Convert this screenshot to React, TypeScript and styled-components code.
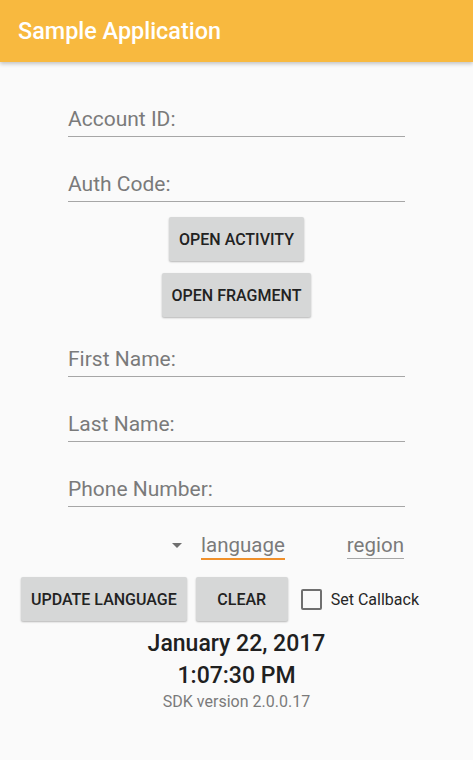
import React from "react";
import styled, { createGlobalStyle } from "styled-components";

const GlobalStyle = createGlobalStyle`
  html, body {
    margin: 0;
    padding: 0;
    background: #fafafa;
  }
  body {
    font-family: Roboto, "Noto Sans", "Liberation Sans", sans-serif;
    width: 473px;
    height: 760px;
    overflow: hidden;
  }
`;

const Screen = styled.div`
  width: 473px;
  height: 760px;
  background: #fafafa;
  display: flex;
  flex-direction: column;
`;

const AppBar = styled.header`
  height: 62px;
  flex: 0 0 62px;
  background: #f8b93f;
  display: flex;
  align-items: center;
  padding-left: 18px;
  box-shadow: 0 2px 4px rgba(0, 0, 0, 0.22);
  position: relative;
  z-index: 1;
`;

const Title = styled.h1`
  margin: 0;
  font-family: Roboto, sans-serif;
  font-weight: 500;
  font-size: 23.4px;
  color: #ffffff;
  line-height: 26px;
  padding-bottom: 1px;
`;

const Content = styled.main`
  display: flex;
  flex-direction: column;
  align-items: center;
`;

const Column = styled.div`
  width: 337px;
  display: flex;
  flex-direction: column;
`;

const Field = styled.div<{ $top: number }>`
  margin-top: ${(p) => p.$top}px;
  padding-bottom: 5px;
  border-bottom: 1px solid #a6a6a6;
  font-size: 21px;
  line-height: 24px;
  color: #7a7a7a;
`;

const ButtonStack = styled.div`
  margin-top: 15px;
  display: flex;
  flex-direction: column;
  align-items: center;
  gap: 12px;
`;

const RaisedButton = styled.button`
  height: 44px;
  min-width: 92px;
  padding: 0 10px;
  border: none;
  border-radius: 2px;
  background: #d6d7d7;
  box-shadow: 0 1px 2px rgba(0, 0, 0, 0.28);
  font-family: Roboto, sans-serif;
  font-weight: 500;
  font-size: 16px;
  color: #222222;
  text-transform: uppercase;
  letter-spacing: 0;
  display: flex;
  align-items: center;
  justify-content: center;
  cursor: pointer;
`;

const SpinnerRow = styled.div`
  margin-top: 26px;
  display: flex;
  justify-content: flex-end;
  align-items: flex-start;
  width: 337px;
  padding-right: 1px;
  box-sizing: border-box;
`;

const Arrow = styled.span`
  width: 0;
  height: 0;
  border-left: 5px solid transparent;
  border-right: 5px solid transparent;
  border-top: 5px solid #6f6f6f;
  margin-top: 10px;
  margin-right: 19px;
`;

const SpinnerText = styled.span<{ $active?: boolean }>`
  font-size: 20.5px;
  line-height: 24px;
  color: #7a7a7a;
  padding-bottom: 1px;
  border-bottom: ${(p) => (p.$active ? "2px solid #f0902a" : "1px solid #a6a6a6")};
  margin-left: ${(p) => (p.$active ? "0" : "62px")};
`;

const BottomRow = styled.div`
  margin-top: 17px;
  align-self: stretch;
  display: flex;
  align-items: center;
  padding-left: 21px;
`;

const ClearButton = styled(RaisedButton)`
  margin-left: 9px;
`;

const CheckLabel = styled.label`
  margin-left: 13px;
  display: flex;
  align-items: center;
  gap: 9px;
  font-size: 16px;
  color: #262626;
`;

const Box = styled.span`
  width: 17px;
  height: 17px;
  border: 2px solid #6f6f6f;
  border-radius: 2px;
`;

const DateText = styled.div<{ $top: number }>`
  margin-top: ${(p) => p.$top}px;
  font-weight: 500;
  font-size: 23px;
  line-height: 32px;
  color: #202020;
  text-align: center;
`;

const Version = styled.div`
  margin-top: 1px;
  font-size: 16px;
  line-height: 18px;
  color: #7a7a7a;
  text-align: center;
`;

export default function App() {
  return (
    <Screen>
      <GlobalStyle />
      <AppBar>
        <Title>Sample Application</Title>
      </AppBar>
      <Content>
        <Column>
          <Field $top={45}>Account ID:</Field>
          <Field $top={35}>Auth Code:</Field>
        </Column>
        <ButtonStack>
          <RaisedButton>Open Activity</RaisedButton>
          <RaisedButton>Open Fragment</RaisedButton>
        </ButtonStack>
        <Column>
          <Field $top={30}>First Name:</Field>
          <Field $top={35}>Last Name:</Field>
          <Field $top={35}>Phone Number:</Field>
        </Column>
        <SpinnerRow>
          <Arrow />
          <SpinnerText $active>language</SpinnerText>
          <SpinnerText>region</SpinnerText>
        </SpinnerRow>
        <BottomRow>
          <RaisedButton>Update Language</RaisedButton>
          <ClearButton>Clear</ClearButton>
          <CheckLabel>
            <Box />
            Set Callback
          </CheckLabel>
        </BottomRow>
        <DateText $top={7}>January 22, 2017</DateText>
        <DateText $top={0}>1:07:30 PM</DateText>
        <Version>SDK version 2.0.0.17</Version>
      </Content>
    </Screen>
  );
}
